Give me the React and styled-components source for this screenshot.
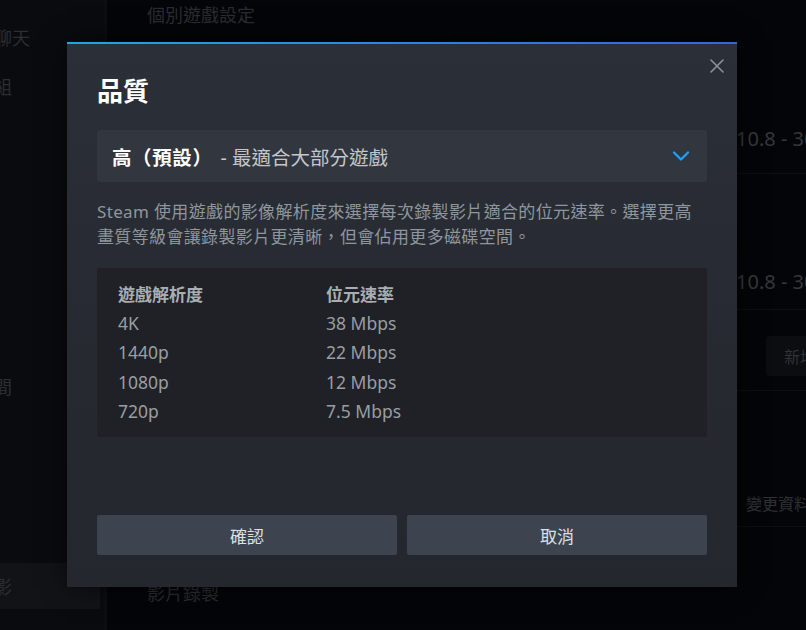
import React from 'react';
import styled, { createGlobalStyle } from 'styled-components';

const GlobalStyle = createGlobalStyle`
  html, body {
    margin: 0;
    padding: 0;
    background: #040508;
    overflow: hidden;
  }
  body {
    font-family: "Noto Sans", "Noto Sans CJK TC", sans-serif;
  }
`;

const resolutions = [
  ['4K', '38 Mbps'],
  ['1440p', '22 Mbps'],
  ['1080p', '12 Mbps'],
  ['720p', '7.5 Mbps'],
];

const ChevronDown = () => (
  <svg width="18" height="12" viewBox="0 0 18 12" fill="none">
    <path d="M2 2.5 L9 9.5 L16 2.5" stroke="#1a9fff" strokeWidth="2.4" strokeLinecap="round" strokeLinejoin="round" />
  </svg>
);

const CloseIcon = () => (
  <svg width="14" height="14" viewBox="0 0 14 14" fill="none">
    <path d="M1 1 L13 13 M13 1 L1 13" stroke="#8b929a" strokeWidth="1.6" strokeLinecap="round" />
  </svg>
);

const App = () => {
  return (
    <Page>
      <GlobalStyle />

      <Sidebar>
        <SideItem top={24}>聊天</SideItem>
        <SideItem top={23}>組</SideItem>
        <SideItem top={274}>間</SideItem>
        <SideItem top={164} active>影</SideItem>
      </Sidebar>

      <Main>
        <SectionTitle>個別遊戲設定</SectionTitle>
        <SettingRow height={146} pad={22}>
          <span />
          <RowValue>10.8 - 30 GB</RowValue>
        </SettingRow>
        <SettingRow height={136} pad={15}>
          <span />
          <RowValue>10.8 - 30 GB</RowValue>
        </SettingRow>
        <SettingRow height={81} pad={14}>
          <span />
          <GhostButton>新增資料夾</GhostButton>
        </SettingRow>
        <SettingRow height={136} pad={11}>
          <span />
          <RowLink>變更資料夾</RowLink>
        </SettingRow>
        <SectionTitle gap={51}>影片錄製</SectionTitle>
      </Main>

      <Overlay>
        <Modal>
          <CloseButton aria-label="close">
            <CloseIcon />
          </CloseButton>

          <Title>品質</Title>

          <Dropdown>
            <DropdownLabel>
              <strong>高（預設）</strong>
              <span> - 最適合大部分遊戲</span>
            </DropdownLabel>
            <ChevronDown />
          </Dropdown>

          <Description>
            Steam 使用遊戲的影像解析度來選擇每次錄製影片適合的位元速率。選擇更高畫質等級會讓錄製影片更清晰，但會佔用更多磁碟空間。
          </Description>

          <RateTable>
            <TableHead>遊戲解析度</TableHead>
            <TableHead>位元速率</TableHead>
            {resolutions.map(([res, rate]) => (
              <React.Fragment key={res}>
                <TableCell>{res}</TableCell>
                <TableCell>{rate}</TableCell>
              </React.Fragment>
            ))}
          </RateTable>

          <ButtonRow>
            <DialogButton>確認</DialogButton>
            <DialogButton>取消</DialogButton>
          </ButtonRow>
        </Modal>
      </Overlay>
    </Page>
  );
};

const Page = styled.div`
  position: relative;
  display: flex;
  width: 100vw;
  height: 100vh;
  overflow: hidden;
  background: #040508;
`;

const Sidebar = styled.div`
  width: 104px;
  flex-shrink: 0;
  display: flex;
  flex-direction: column;
  background: #0a0b0e;
  border-right: 3px solid #0c0d10;
`;

const SideItem = styled.div`
  margin-top: ${(p) => p.top}px;
  height: ${(p) => (p.active ? 46 : 26)}px;
  margin-right: 4px;
  display: flex;
  align-items: center;
  text-indent: -6px;
  font-size: 18px;
  color: #2c2e32;
  background: ${(p) => (p.active ? '#111317' : 'transparent')};
`;

const Main = styled.div`
  flex-shrink: 0;
  width: 860px;
  padding-left: 40px;
  display: flex;
  flex-direction: column;
`;

const SectionTitle = styled.div`
  margin-top: ${(p) => p.gap || 0}px;
  height: 28px;
  display: flex;
  align-items: center;
  font-size: 18px;
  color: #2a2c31;
`;

const SettingRow = styled.div`
  box-sizing: border-box;
  height: ${(p) => p.height}px;
  padding-bottom: ${(p) => p.pad}px;
  display: grid;
  grid-template-columns: 589px 1fr;
  align-items: end;
  border-bottom: 1px solid #0e0f13;
`;

const RowValue = styled.div`
  font-size: 20px;
  line-height: 24px;
  color: #35373b;
  white-space: nowrap;
`;

const GhostButton = styled.div`
  margin-left: 30px;
  height: 40px;
  width: 120px;
  display: flex;
  align-items: center;
  padding-left: 18px;
  background: #0c0d10;
  border-radius: 3px;
  font-size: 16px;
  color: #303236;
  white-space: nowrap;
`;

const RowLink = styled.div`
  margin-left: 10px;
  font-size: 16px;
  line-height: 22px;
  color: #2f3135;
  white-space: nowrap;
`;

const Overlay = styled.div`
  position: absolute;
  inset: 0;
  display: flex;
  align-items: flex-start;
  justify-content: center;
  padding-top: 42px;
`;

const Modal = styled.div`
  position: relative;
  box-sizing: border-box;
  width: 670px;
  height: 545px;
  margin-left: -2px;
  padding: 31px 30px 32px;
  display: flex;
  flex-direction: column;
  background: linear-gradient(to bottom, #2b2f37 0%, #262930 60%, #24272d 100%);
  border-top: 2px solid transparent;
  border-image: linear-gradient(to right, #22a6dc, #3b62dd) 1;
  border-left: 0;
  border-right: 0;
  border-bottom: 0;
  box-shadow: 0 0 24px rgba(0, 0, 0, 0.6);
`;

const CloseButton = styled.button`
  position: absolute;
  top: 15px;
  right: 13px;
  width: 14px;
  height: 14px;
  padding: 0;
  border: 0;
  background: none;
  display: flex;
  cursor: pointer;
`;

const Title = styled.h1`
  margin: 0;
  font-size: 26px;
  line-height: 32px;
  font-weight: 700;
  color: #ffffff;
`;

const Dropdown = styled.div`
  margin-top: 23px;
  height: 52px;
  display: flex;
  align-items: center;
  justify-content: space-between;
  padding: 0 17px 0 15px;
  background: #32363e;
  border-radius: 3px;
`;

const DropdownLabel = styled.div`
  font-size: 19.5px;
  color: #c3c7cc;
  white-space: pre;

  strong {
    color: #ffffff;
    font-weight: 700;
    letter-spacing: 0.6px;
  }

  span {
    padding-left: 3px;
  }
`;

const Description = styled.p`
  margin: 17px 0 0;
  padding-right: 14px;
  font-size: 17px;
  letter-spacing: 0.35px;
  line-height: 25px;
  color: #8f969d;
`;

const RateTable = styled.div`
  margin-top: 19px;
  height: 169px;
  box-sizing: border-box;
  padding: 11px 21px;
  display: grid;
  grid-template-columns: 208px 1fr;
  grid-auto-rows: 29.4px;
  align-items: center;
  background: #1f2126;
  border-radius: 2px;
`;

const TableHead = styled.div`
  font-size: 17px;
  font-weight: 700;
  color: #a9aeb3;
`;

const TableCell = styled.div`
  font-size: 17.5px;
  color: #989ea4;
`;

const ButtonRow = styled.div`
  margin-top: auto;
  display: grid;
  grid-template-columns: 1fr 1fr;
  gap: 10px;
`;

const DialogButton = styled.button`
  height: 40px;
  border: 0;
  border-radius: 2px;
  background: #3d4450;
  color: #dce0e3;
  font-family: "Noto Sans", "Noto Sans CJK TC", sans-serif;
  font-size: 17px;
  cursor: pointer;
`;

export default App;
